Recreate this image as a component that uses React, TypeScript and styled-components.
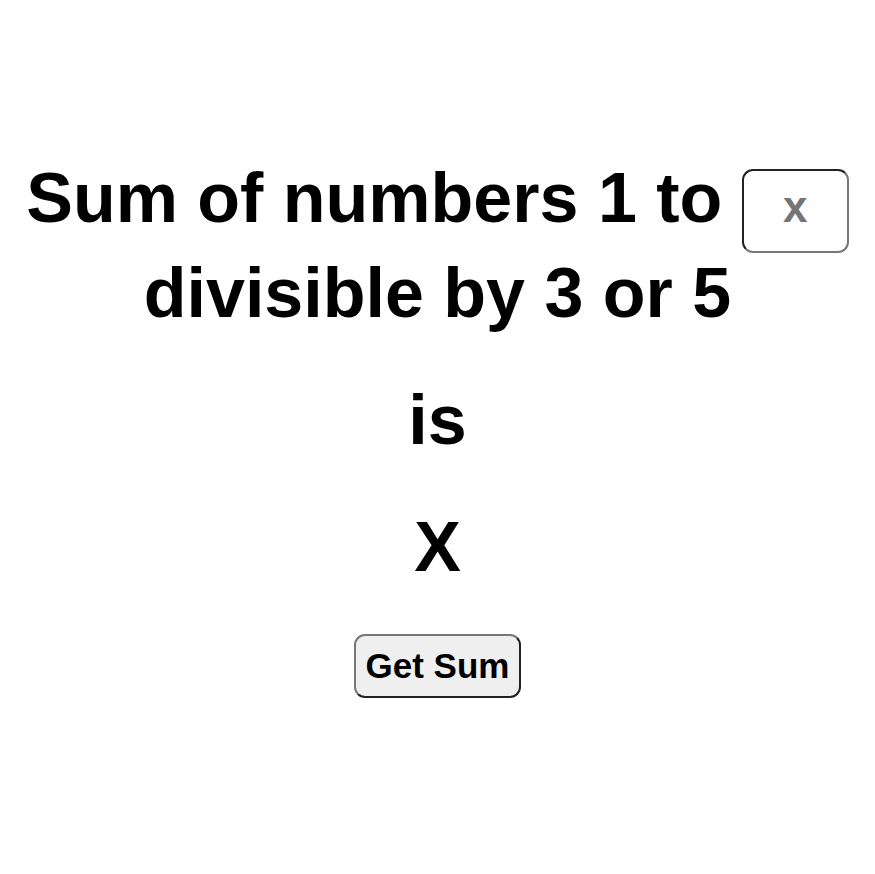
import React, { useState } from 'react';
import styled, { createGlobalStyle } from 'styled-components';

const GlobalStyle = createGlobalStyle`
  body {
    margin: 0;
    background: #fff;
    font-family: "Liberation Sans", Arial, sans-serif;
  }
`;

const Page = styled.div`
  font-size: 35px;
  text-align: center;
  padding-top: 111.5px;
`;

const Title = styled.h1`
  font-size: 2em;
  font-weight: bold;
  margin: 0.67em 0;
  color: #000;
`;

const NumberInput = styled.input`
  box-sizing: border-box;
  width: 107px;
  height: 84px;
  padding: 11px 0 19px;
  font-family: "Liberation Sans", Arial, sans-serif;
  font-size: 44px;
  font-weight: bold;
  text-align: center;
  vertical-align: baseline;
  border: 2px solid;
  border-color: #222 #777 #777 #222;
  border-radius: 11px;
  background: #fff;
  outline: none;
  &::placeholder {
    color: #757575;
  }
`;

const SumButton = styled.button`
  font-family: "Liberation Sans", Arial, sans-serif;
  font-size: 35px;
  font-weight: bold;
  color: #000;
  padding: 10px 10px;
  background: #efefef;
  border: 2px solid;
  border-color: #777 #222 #222 #777;
  border-radius: 11px;
  cursor: pointer;
`;

const sumDivisible = (n: number) => {
  let total = 0;
  for (let i = 1; i <= n; i++) {
    if (i % 3 === 0 || i % 5 === 0) total += i;
  }
  return total;
};

const App = () => {
  const [value, setValue] = useState('');
  const [result, setResult] = useState<string>('X');

  return (
    <>
      <GlobalStyle />
      <Page>
        <Title>
          Sum of numbers 1 to{' '}
          <NumberInput
            type="text"
            placeholder="x"
            value={value}
            onChange={e => setValue(e.target.value)}
          />{' '}
          divisible by 3 or 5
        </Title>
        <Title>is</Title>
        <Title>{result}</Title>
        <SumButton onClick={() => setResult(String(sumDivisible(Number(value) || 0)))}>
          Get Sum
        </SumButton>
      </Page>
    </>
  );
};

export default App;
